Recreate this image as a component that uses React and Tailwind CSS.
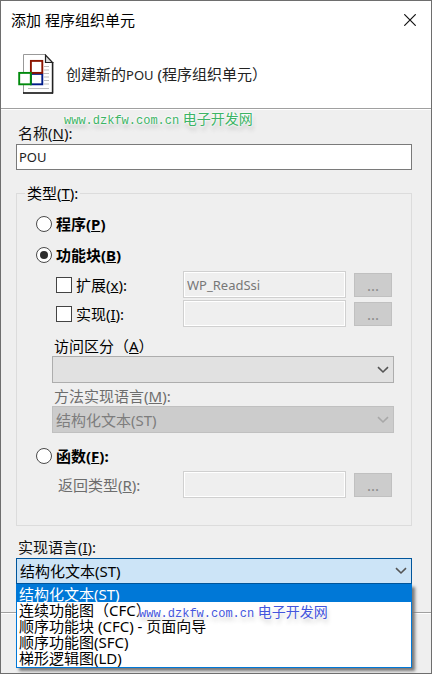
import { useState } from "react";

const LANGUAGES = [
  "结构化文本(ST)",
  "连续功能图（CFC）",
  "顺序功能块 (CFC) - 页面向导",
  "顺序功能图(SFC)",
  "梯形逻辑图(LD)",
];

function PouIcon() {
  return (
    <svg width="36" height="40" viewBox="0 0 36 40" fill="none" aria-hidden="true">
      <path d="M5.5.5H27L34.5 8v31h-29z" fill="#fff" />
      <path d="M5.5 39V.5H27" stroke="#999" />
      <path d="M5 39h30" stroke="#111" strokeWidth="1.6" />
      <path d="M34.6 8v31.5" stroke="#222" strokeWidth="1.6" />
      <path d="M27.5 1v7.5h7z" fill="#ddd" stroke="#222" strokeWidth="1.2" />
      <path d="M26 12.5h5M26 16h5M26 19.5h5M26 23h5M26 26.5h5M26 30h5M10 34.5h21" stroke="#bbb" />
      <rect x="12.9" y="19.9" width="11.4" height="10.4" fill="#fff" stroke="#001c88" strokeWidth="1.9" />
      <rect x="12.9" y="6.9" width="11.4" height="12" fill="#fff" stroke="#8c1500" strokeWidth="1.9" />
      <rect x="1.2" y="18.9" width="11.6" height="11.4" fill="#fff" stroke="#008a0c" strokeWidth="1.9" />
    </svg>
  );
}

function Chevron({ className }) {
  return (
    <svg
      className={`pointer-events-none absolute top-1/2 right-[5px] -translate-y-1/2 ${className}`}
      width="12"
      height="8"
      viewBox="0 0 12 8"
      fill="none"
      stroke="currentColor"
      strokeWidth="1.6"
      aria-hidden="true"
    >
      <path d="M1 1.2l5 4.8 5-4.8" />
    </svg>
  );
}

function TypeRadio({ value, selected, onSelect, className = "", children }) {
  return (
    <label className={`flex h-5 items-center gap-1 font-bold ${className}`}>
      <input
        type="radio"
        name="pou-type"
        checked={selected === value}
        onChange={() => onSelect(value)}
        className="flex size-4 shrink-0 appearance-none items-center justify-center rounded-full border border-[#4a4a4a] bg-white before:size-2 before:rounded-full checked:before:bg-[#2e2e2e]"
      />
      <span>{children}</span>
    </label>
  );
}

function TypeCheckbox({ children }) {
  return (
    <label className="flex w-[127px] shrink-0 items-center gap-1">
      <input
        type="checkbox"
        className="size-4 shrink-0 appearance-none border border-[#444] bg-white checked:bg-[#0078d7]"
      />
      <span>{children}</span>
    </label>
  );
}

function BrowseField({ label, value = "" }) {
  return (
    <>
      <input
        type="text"
        disabled
        aria-label={label}
        defaultValue={value}
        className="h-full w-0 min-w-0 flex-1 border border-[#d0d0d0] bg-[#efefef] px-[3px] text-[13px] text-[#777] inset-ring inset-ring-white"
      />
      <button
        type="button"
        disabled
        aria-label={`${label} ...`}
        className="ml-2 h-6 w-[38px] shrink-0 border border-[#c0c0c0] bg-[#ccc] text-[#8b8b8b]"
      >
        ...
      </button>
    </>
  );
}

export default function App() {
  const [type, setType] = useState("block");
  const [language, setLanguage] = useState(LANGUAGES[0]);

  return (
    <div className="flex min-h-screen flex-col border border-[#6e6e6e] bg-[#efefef] font-['Noto_Sans','Noto_Sans_CJK_SC',sans-serif] text-[15px] leading-5 text-black">
      <header className="relative border-b border-[#a0a0a0] bg-white">
        <div className="flex h-[38px] items-center justify-between pr-[15px] pl-[10px]">
          <h1>添加 程序组织单元</h1>
          <button type="button" aria-label="关闭">
            <svg width="12" height="12" viewBox="0 0 12 12" stroke="#111" strokeWidth="1.2" aria-hidden="true">
              <path d="M.3.3l11.4 11.4M11.7.3L.3 11.7" />
            </svg>
          </button>
        </div>
        <div className="flex items-center gap-3 px-[17px] pt-[15px] pb-[14px]">
          <PouIcon />
          <p className="text-[#222]">
            创建新的<span className="text-[13px]">POU</span> (程序组织单元）
          </p>
        </div>
        <span className="absolute top-[108px] left-[63px] z-10 text-[14px] whitespace-nowrap text-[#3cb465] [text-shadow:0_0_2px_#fff,0_0_3px_#fff,0_0_4px_#fff,1px_4px_4px_#bbb]">
          <span className="font-['Liberation_Mono',monospace] text-[12px]">www.dzkfw.com.cn</span> 电子开发网
        </span>
      </header>

      <main className="border-t border-white pr-[19px] pl-[15px] pt-[13px]">
        <label htmlFor="pou-name" className="ml-0.5 block text-[#111]">
          名称(<u>N</u>):
        </label>
        <input
          id="pou-name"
          type="text"
          defaultValue="POU"
          className="mt-px block h-[26px] w-full border border-[#7a7a7a] bg-white px-0.5 text-[13px] text-[#222]"
        />

        <fieldset className="mt-[13px] min-w-0 border border-[#dcdcdc] pr-[17px] pb-[27px] pl-[19px]">
          <legend className="-ml-[11px] px-0.5">
            类型(<u>T</u>):
          </legend>

          <TypeRadio value="program" selected={type} onSelect={setType} className="mt-[11px]">
            程序(<u>P</u>)
          </TypeRadio>
          <TypeRadio value="block" selected={type} onSelect={setType} className="mt-[11px]">
            功能块(<u>B</u>)
          </TypeRadio>

          <div className="mt-1.5 flex h-[27px] items-center pr-0.5 pl-5">
            <TypeCheckbox>
              扩展(<u>x</u>):
            </TypeCheckbox>
            <BrowseField label="扩展" value="WP_ReadSsi" />
          </div>
          <div className="mt-0.5 flex h-[27px] items-center pr-0.5 pl-5">
            <TypeCheckbox>
              实现(<u>I</u>):
            </TypeCheckbox>
            <BrowseField label="实现" />
          </div>

          <div className="mt-[9px] pl-4">
            <label htmlFor="access" className="block pl-0.5">
              访问区分（<u>A</u>）
            </label>
            <div className="relative">
              <select
                id="access"
                className="block h-[27px] w-full appearance-none border border-[#adadad] bg-[#e1e1e1] px-1"
              />
              <Chevron className="text-[#555]" />
            </div>
            <label htmlFor="method-language" className="mt-[3px] block pl-0.5 text-[#6d6d6d]">
              方法实现语言(<u>M</u>):
            </label>
            <div className="relative">
              <select
                id="method-language"
                disabled
                className="block h-[27px] w-full appearance-none border border-[#c0c0c0] bg-[#ccc] px-[3px] text-[#7d7d7d] opacity-100"
              >
                <option>结构化文本(ST)</option>
              </select>
              <Chevron className="text-[#a8a8a8]" />
            </div>
          </div>

          <TypeRadio value="function" selected={type} onSelect={setType} className="mt-[13px]">
            函数(<u>F</u>):
          </TypeRadio>
          <div className="mt-[5px] flex h-[27px] items-center pr-0.5 pl-5">
            <span className="w-[127px] shrink-0 pl-0.5 text-[#6d6d6d]">
              返回类型(<u>R</u>):
            </span>
            <BrowseField label="返回类型" />
          </div>
        </fieldset>

        <label htmlFor="language" className="mt-[11px] ml-0.5 block text-[#111]">
          实现语言(<u>I</u>):
        </label>
        <div className="relative mt-px">
          <select
            id="language"
            value={language}
            onChange={(event) => setLanguage(event.target.value)}
            className="block h-[26px] w-full appearance-none border border-[#00559b] bg-[#cce4f7] px-[3px]"
          >
            {LANGUAGES.map((name) => (
              <option key={name}>{name}</option>
            ))}
          </select>
          <Chevron className="text-[#555]" />

          <ul
            role="listbox"
            aria-label="实现语言"
            className="absolute inset-x-0 top-full border border-[#0078d7] bg-white pb-px leading-4 shadow-[3px_3px_3px_#777]"
          >
            {LANGUAGES.map((name) => (
              <li
                key={name}
                role="option"
                aria-selected={name === language}
                onClick={() => setLanguage(name)}
                className="px-0.5 first:pt-px aria-selected:bg-[#0078d7] aria-selected:text-white"
              >
                {name}
              </li>
            ))}
          </ul>
          <span className="pointer-events-none absolute top-[44px] left-[123px] text-[14px] whitespace-nowrap text-[#4455dd] [text-shadow:0_0_2px_#fff,0_0_3px_#fff,1px_4px_4px_#ccc]">
            <span className="font-['Liberation_Mono',monospace] text-[12px]">www.dzkfw.com.cn</span> 电子开发网
          </span>
        </div>
      </main>

      <footer className="mt-7 flex-1 border-t border-[#a0a0a0] pt-[60px] shadow-[inset_0_1px_0_#fff]" />
    </div>
  );
}
